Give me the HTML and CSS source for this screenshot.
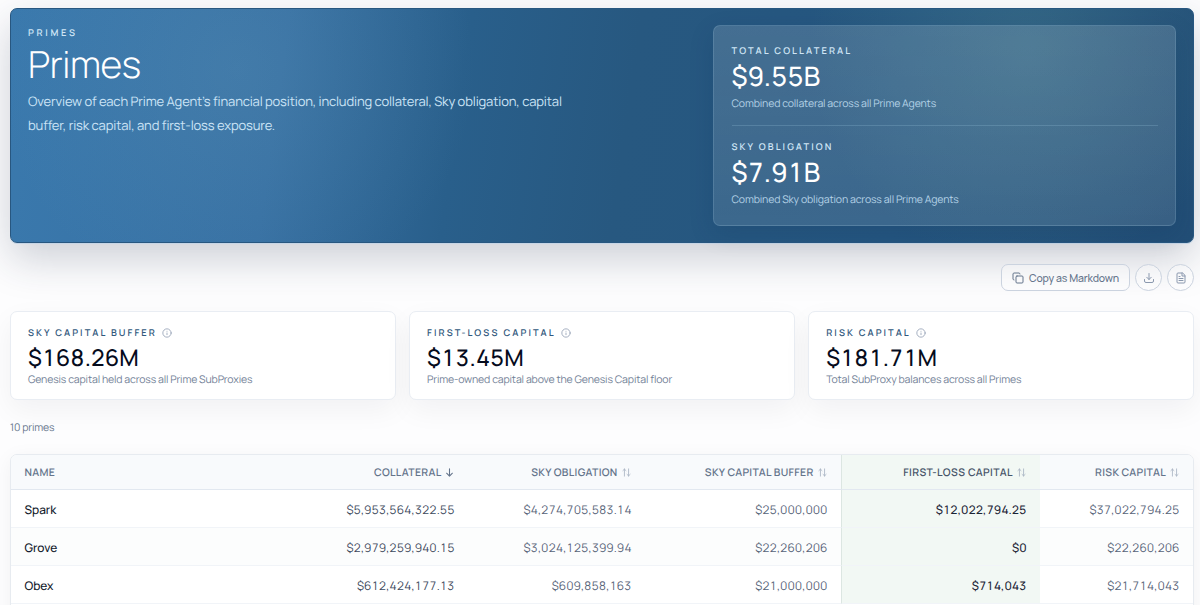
FILE: index.html
```
<!DOCTYPE html>
<html lang="en">
<head>
  <meta charset="UTF-8">
  <meta name="viewport" content="width=device-width, initial-scale=1.0">
  <title>Primes</title>
  <link rel="stylesheet" href="styles.css">
</head>
<body>
  <svg class="sprite" aria-hidden="true">
    <symbol id="icon-info" viewBox="0 0 24 24">
      <circle cx="12" cy="12" r="10"/><path d="M12 16v-4M12 8h.01"/>
    </symbol>
    <symbol id="icon-sort" viewBox="0 0 10 10">
      <path d="M2.7 9V1.2M1 2.9l1.7-1.7 1.7 1.7M7.3 1v7.8M5.6 7.1l1.7 1.7L9 7.1"/>
    </symbol>
  </svg>

  <main class="page">
    <section class="hero">
      <div class="intro">
        <p class="eyebrow">Primes</p>
        <h1>Primes</h1>
        <p class="lead">Overview of each Prime Agent’s financial position, including collateral, Sky obligation, capital<br>buffer, risk capital, and first-loss exposure.</p>
      </div>
      <div class="totals">
        <div class="total">
          <p class="eyebrow">Total collateral</p>
          <p class="amount">$9.55B</p>
          <p class="note">Combined collateral across all Prime Agents</p>
        </div>
        <div class="total">
          <p class="eyebrow">Sky obligation</p>
          <p class="amount">$7.91B</p>
          <p class="note">Combined Sky obligation across all Prime Agents</p>
        </div>
      </div>
    </section>

    <div class="actions">
      <button class="btn">
        <svg viewBox="0 0 24 24"><rect x="8" y="8" width="14" height="14" rx="2"/><path d="M4 16c-1.100 0-2-.9-2-2V4c0-1.100.9-2 2-2h10c1.100 0 2 .9 2 2"/></svg>
        <span>Copy as Markdown</span>
      </button>
      <button class="btn round" aria-label="Download">
        <svg viewBox="0 0 24 24"><path d="M12 3v12M7.500 10.500 12 15l4.500-4.500M3 15v3a3 3 0 0 0 3 3h12a3 3 0 0 0 3-3v-3"/></svg>
      </button>
      <button class="btn round" aria-label="Document">
        <svg viewBox="0 0 24 24"><path d="M14.500 2H6a2 2 0 0 0-2 2v16a2 2 0 0 0 2 2h12a2 2 0 0 0 2-2V7.500zM14 2v6h6M8 9h2M8 13h8M8 17h8"/></svg>
      </button>
    </div>

    <section class="cards">
      <div class="card">
        <p class="eyebrow">Sky capital buffer <svg><use href="#icon-info"/></svg></p>
        <p class="amount">$168.26M</p>
        <p class="note">Genesis capital held across all Prime SubProxies</p>
      </div>
      <div class="card">
        <p class="eyebrow">First-loss capital <svg><use href="#icon-info"/></svg></p>
        <p class="amount">$13.45M</p>
        <p class="note">Prime-owned capital above the Genesis Capital floor</p>
      </div>
      <div class="card">
        <p class="eyebrow">Risk capital <svg><use href="#icon-info"/></svg></p>
        <p class="amount">$181.71M</p>
        <p class="note">Total SubProxy balances across all Primes</p>
      </div>
    </section>

    <p class="count">10 primes</p>

    <div class="table-wrap">
      <table>
        <colgroup>
          <col class="c-name"><col class="c-collateral"><col class="c-obligation"><col class="c-buffer"><col class="c-loss"><col>
        </colgroup>
        <thead>
          <tr>
            <th>Name</th>
            <th class="sorted">Collateral <svg viewBox="0 0 10 10"><path d="M5 1v8M1.800 5.800 5 9l3.200-3.200"/></svg></th>
            <th>Sky obligation <svg><use href="#icon-sort"/></svg></th>
            <th>Sky capital buffer <svg><use href="#icon-sort"/></svg></th>
            <th class="loss">First-loss capital <svg><use href="#icon-sort"/></svg></th>
            <th>Risk capital <svg><use href="#icon-sort"/></svg></th>
          </tr>
        </thead>
        <tbody>
          <tr>
            <td>Spark</td>
            <td class="main">$5,953,564,322.55</td>
            <td>$4,274,705,583.14</td>
            <td>$25,000,000</td>
            <td class="loss">$12,022,794.25</td>
            <td>$37,022,794.25</td>
          </tr>
          <tr>
            <td>Grove</td>
            <td class="main">$2,979,259,940.15</td>
            <td>$3,024,125,399.94</td>
            <td>$22,260,206</td>
            <td class="loss">$0</td>
            <td>$22,260,206</td>
          </tr>
          <tr>
            <td>Obex</td>
            <td class="main">$612,424,177.13</td>
            <td>$609,858,163</td>
            <td>$21,000,000</td>
            <td class="loss">$714,043</td>
            <td>$21,714,043</td>
          </tr>
        </tbody>
      </table>
    </div>
  </main>
</body>
</html>
```

FILE: styles.css
```
* {
  box-sizing: border-box;
}
body {
  margin: 0;
  height: 605px;
  overflow: hidden;
  background: #fdfdfe;
  color: #0f172a;
  font-family: Manrope, Inter, sans-serif;
  text-rendering: geometricPrecision;
}
p, h1 {
  margin: 0;
}
svg {
  fill: none;
  stroke: currentColor;
  stroke-width: 2;
  stroke-linecap: round;
  stroke-linejoin: round;
}
.sprite {
  display: none;
}
.page {
  padding: 8px 6px 0 10px;
}
.hero {
  display: flex;
  justify-content: space-between;
  height: 235px;
  padding: 17px;
  border: 1px solid #285780;
  border-radius: 7px;
  color: #fff;
  background:
    radial-gradient(circle at 225px 60px, rgba(105, 158, 186, 0.22), transparent 240px),
    radial-gradient(circle at 1018px 40px, rgba(105, 168, 166, 0.24), transparent 220px),
    linear-gradient(98deg, #3a79ad 0%, #3770a3 23%, #295f8b 38%, #275880 52%, #255680 75%, #224e76 100%);
  box-shadow: 0 1px 0 #c6d5e5, 0 16px 42px rgba(30, 45, 72, 0.22);
}
.eyebrow {
  font-size: 9.3px;
  line-height: 14px;
  font-weight: 600;
  letter-spacing: 2.1px;
  text-transform: uppercase;
  white-space: nowrap;
}
.hero .eyebrow {
  color: #d0e6f6;
}
.intro .eyebrow {
  letter-spacing: 2.7px;
}
h1 {
  margin-top: 5px;
  font-size: 37.3px;
  line-height: 40px;
  font-weight: 300;
  letter-spacing: -0.4px;
}
.lead {
  margin-top: 3.5px;
  font-size: 13px;
  line-height: 24px;
  font-weight: 400;
  letter-spacing: -0.13px;
  color: #cce4f6;
  white-space: nowrap;
}
.totals {
  width: 463px;
  height: 201px;
  margin-top: -1px;
  padding: 0 17px 0 17.5px;
  border: 1px solid rgba(160, 200, 224, 0.2);
  border-radius: 7px;
  background: linear-gradient(rgba(255, 255, 255, 0.14), rgba(255, 255, 255, 0.1));
  box-shadow: 0 8px 24px rgba(15, 45, 78, 0.16);
}
.total {
  padding-top: 17.5px;
  height: 99px;
}
.total + .total {
  padding-top: 13.5px;
  border-top: 1px solid rgba(150, 195, 220, 0.25);
}
.total .amount {
  margin-top: 2.5px;
  font-size: 26.6px;
  line-height: 32px;
  letter-spacing: -0.1px;
}
.amount {
  font-weight: 500;
  font-variant-numeric: tabular-nums;
}
.note {
  font-size: 10.5px;
  line-height: 16px;
  font-weight: 400;
  letter-spacing: -0.14px;
  white-space: nowrap;
}
.total .note {
  margin-top: 3.5px;
  color: #b5d3e7;
}
.actions {
  display: flex;
  justify-content: flex-end;
  gap: 5px;
  margin-top: 21px;
}
.btn {
  display: flex;
  align-items: center;
  justify-content: center;
  gap: 5px;
  width: 129px;
  height: 27px;
  padding: 0;
  border: 1px solid #cbd3df;
  border-radius: 7px;
  background: rgba(255, 255, 255, 0.3);
  color: #64748b;
  font: inherit;
  font-size: 10.5px;
  font-weight: 500;
  letter-spacing: -0.13px;
}
.btn svg {
  width: 12px;
  height: 12px;
}
.btn.round {
  width: 27px;
  border-radius: 50%;
  color: #8a98ae;
}
.cards {
  display: grid;
  grid-template-columns: repeat(3, 1fr);
  gap: 13.3px;
  margin-top: 20px;
}
.card {
  height: 89px;
  padding: 13.5px 17px;
  border: 1px solid #e9edf3;
  border-radius: 7px;
  background: #fff;
  box-shadow: 0 10px 28px rgba(15, 23, 42, 0.05);
}
.card .eyebrow {
  display: flex;
  align-items: center;
  gap: 5px;
  color: #31587c;
}
.card .eyebrow svg {
  width: 10px;
  height: 10px;
  color: #94a0b4;
}
.card .amount {
  margin-top: 3px;
  font-size: 23px;
  line-height: 29px;
  color: #050b1c;
}
.card .note {
  color: #718096;
}
.count {
  margin-top: 20px;
  font-size: 10.5px;
  line-height: 16px;
  font-weight: 400;
  letter-spacing: -0.14px;
  color: #64748b;
}
.table-wrap {
  height: 180px;
  margin-top: 18px;
  border: 1px solid #e7ebf0;
  border-radius: 7px;
  overflow: hidden;
  background: #fff;
  box-shadow: 0 4px 20px rgba(15, 23, 42, 0.05);
}
table {
  width: 1182px;
  table-layout: fixed;
  border-collapse: separate;
  border-spacing: 0;
}
.c-name {
  width: 280px;
}
.c-collateral {
  width: 177px;
}
.c-obligation {
  width: 177px;
}
.c-buffer {
  width: 196px;
}
.c-loss {
  width: 199px;
}
th, td {
  padding: 0 13.5px 0 14px;
  text-align: right;
  white-space: nowrap;
}
th:first-child, td:first-child {
  padding-left: 13.5px;
  text-align: left;
}
th {
  height: 35px;
  padding-top: 1px;
  padding-right: 14.5px;
  border-bottom: 1px solid #e2e8f0;
  background: #f8fafc;
  color: #64748b;
  font-size: 10.5px;
  font-weight: 600;
  letter-spacing: 0.32px;
  text-transform: uppercase;
}
th svg {
  width: 9px;
  height: 9px;
  margin-left: 1.5px;
  vertical-align: -1px;
  stroke-width: 0.9;
  color: #a5b0c0;
}
th.sorted svg {
  margin-left: 1px;
  stroke-width: 1.2;
  color: #64748b;
}
td {
  height: 38px;
  padding-top: 1px;
  border-bottom: 1px solid #f1f4f8;
  color: #566277;
  font-size: 11.9px;
  font-variant-numeric: tabular-nums;
}
tbody tr:nth-child(even) td {
  background: #fcfdfd;
}
td:first-child {
  color: #0f172a;
  font-weight: 500;
}
td.main {
  color: #3c485b;
}
th.loss, tbody tr td.loss {
  border-left: 1px solid #dce6e2;
  background: #f2f8f4;
}
th.loss {
  color: #475569;
  letter-spacing: 0.4px;
}
td.loss {
  color: #1b2434;
  font-weight: 500;
}
```
